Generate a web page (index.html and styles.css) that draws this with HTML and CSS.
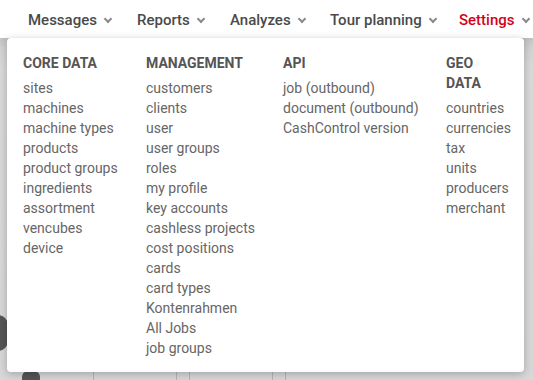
FILE: index.html
```html
<!DOCTYPE html>
<html lang="en">
<head>
    <meta charset="UTF-8">
    <meta name="viewport" content="width=device-width, initial-scale=1.0">
    <title>Settings</title>
    <link rel="stylesheet" href="styles.css">
</head>
<body>
    <nav class="topnav">
        <a class="nav-item messages">Messages <span class="chev"></span></a>
        <a class="nav-item reports">Reports <span class="chev"></span></a>
        <a class="nav-item analyzes">Analyzes <span class="chev"></span></a>
        <a class="nav-item tours">Tour planning <span class="chev"></span></a>
        <a class="nav-item active">Settings <span class="chev"></span></a>
    </nav>
    <main class="page">
        <div class="status-icon"></div>
        <div class="handle"></div>
        <div class="row-cells">
            <div class="cell c1"></div>
            <div class="cell c2"></div>
            <div class="cell c3"></div>
            <div class="cell c4"></div>
            <div class="cell c5"></div>
        </div>

        <div class="dropdown">
            <div class="col">
                <h4>Core data</h4>
                <a>sites</a>
                <a>machines</a>
                <a>machine types</a>
                <a>products</a>
                <a>product groups</a>
                <a>ingredients</a>
                <a>assortment</a>
                <a>vencubes</a>
                <a>device</a>
            </div>
            <div class="col">
                <h4>Management</h4>
                <a>customers</a>
                <a>clients</a>
                <a>user</a>
                <a>user groups</a>
                <a>roles</a>
                <a>my profile</a>
                <a>key accounts</a>
                <a>cashless projects</a>
                <a>cost positions</a>
                <a>cards</a>
                <a>card types</a>
                <a>Kontenrahmen</a>
                <a>All Jobs</a>
                <a>job groups</a>
            </div>
            <div class="col">
                <h4>API</h4>
                <a>job (outbound)</a>
                <a>document (outbound)</a>
                <a>CashControl version</a>
            </div>
            <div class="col">
                <h4>Geo data</h4>
                <a>countries</a>
                <a>currencies</a>
                <a>tax</a>
                <a>units</a>
                <a>producers</a>
                <a>merchant</a>
            </div>
        </div>
    </main>
</body>
</html>
```

FILE: styles.css
```css
body {
    margin: 0;
    font-family: Roboto, "Liberation Sans", sans-serif;
    background-color: #d6d6d6;
    height: 380px;
    overflow: hidden;
}
.topnav {
    height: 38px;
    box-sizing: border-box;
    padding: 2px 0 0 28px;
    background-color: #fff;
    display: flex;
    align-items: center;
    position: relative;
    z-index: 2;
    box-shadow: 0 2px 10px rgba(0, 0, 0, 0.15);
}
.nav-item {
    font-size: 15px;
    font-weight: 500;
    color: #4a4a4a;
    display: flex;
    align-items: center;
    white-space: nowrap;
}
.messages { width: 109px; }
.reports { width: 93px; }
.analyzes { width: 100px; }
.tours { width: 129px; }
.nav-item.active {
    color: #d0021b;
}
.chev {
    display: inline-block;
    width: 4px;
    height: 4px;
    border-right: 2px solid #8a8a8a;
    border-bottom: 2px solid #8a8a8a;
    transform: rotate(45deg);
    margin-left: 8px;
    margin-top: -3px;
}
.page {
    position: relative;
    height: 342px;
    background: linear-gradient(to bottom, #cfcfcf 0, #dadada 30px, #d8d8d8 100%);
}
.status-icon {
    position: absolute;
    left: -12px;
    top: 277px;
    width: 20px;
    height: 36px;
    border-radius: 10px;
    background-color: #555;
}
.handle {
    position: absolute;
    left: 22px;
    top: 333px;
    width: 18px;
    height: 14px;
    border-radius: 6px;
    background-color: #555;
}
.row-cells {
    position: absolute;
    left: 0;
    right: 0;
    top: 334px;
    height: 10px;
    display: flex;
}
.cell {
    border-right: 1px solid #b5b5b5;
    height: 10px;
}
.c1 { width: 93px; }
.c2 { width: 82px; }
.c3 { width: 12px; }
.c4 { width: 82px; }
.c5 { width: 12px; }
.dropdown {
    position: absolute;
    left: 7px;
    top: 0;
    width: 487px;
    padding: 15px 14px 14px 16px;
    background-color: #fff;
    border-radius: 4px;
    box-shadow: 0 2px 8px rgba(0, 0, 0, 0.25);
    display: grid;
    grid-template-columns: 123px 137px 163px 64px;
    align-items: start;
    z-index: 3;
}
.col {
    display: flex;
    flex-direction: column;
}
.col h4 {
    margin: 0 0 5px 0;
    font-size: 14px;
    line-height: 20px;
    font-weight: 700;
    text-transform: uppercase;
    color: #555;
}
.col a {
    font-size: 14px;
    line-height: 20px;
    color: #666;
    white-space: nowrap;
}
```
